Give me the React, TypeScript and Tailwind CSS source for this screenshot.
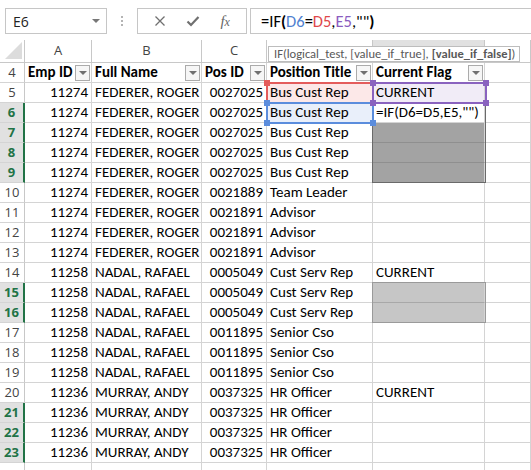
import React from 'react';

type Row = { n: number; id: string; name: string; pos: string; title: string; flag?: string };

const ROWS: Row[] = [
  { n: 5, id: '11274', name: 'FEDERER, ROGER', pos: '0027025', title: 'Bus Cust Rep', flag: 'CURRENT' },
  { n: 6, id: '11274', name: 'FEDERER, ROGER', pos: '0027025', title: 'Bus Cust Rep', flag: '=IF(D6=D5,E5,"")' },
  { n: 7, id: '11274', name: 'FEDERER, ROGER', pos: '0027025', title: 'Bus Cust Rep' },
  { n: 8, id: '11274', name: 'FEDERER, ROGER', pos: '0027025', title: 'Bus Cust Rep' },
  { n: 9, id: '11274', name: 'FEDERER, ROGER', pos: '0027025', title: 'Bus Cust Rep' },
  { n: 10, id: '11274', name: 'FEDERER, ROGER', pos: '0021889', title: 'Team Leader' },
  { n: 11, id: '11274', name: 'FEDERER, ROGER', pos: '0021891', title: 'Advisor' },
  { n: 12, id: '11274', name: 'FEDERER, ROGER', pos: '0021891', title: 'Advisor' },
  { n: 13, id: '11274', name: 'FEDERER, ROGER', pos: '0021891', title: 'Advisor' },
  { n: 14, id: '11258', name: 'NADAL, RAFAEL', pos: '0005049', title: 'Cust Serv Rep', flag: 'CURRENT' },
  { n: 15, id: '11258', name: 'NADAL, RAFAEL', pos: '0005049', title: 'Cust Serv Rep' },
  { n: 16, id: '11258', name: 'NADAL, RAFAEL', pos: '0005049', title: 'Cust Serv Rep' },
  { n: 17, id: '11258', name: 'NADAL, RAFAEL', pos: '0011895', title: 'Senior Cso' },
  { n: 18, id: '11258', name: 'NADAL, RAFAEL', pos: '0011895', title: 'Senior Cso' },
  { n: 19, id: '11258', name: 'NADAL, RAFAEL', pos: '0011895', title: 'Senior Cso' },
  { n: 20, id: '11236', name: 'MURRAY, ANDY', pos: '0037325', title: 'HR Officer', flag: 'CURRENT' },
  { n: 21, id: '11236', name: 'MURRAY, ANDY', pos: '0037325', title: 'HR Officer' },
  { n: 22, id: '11236', name: 'MURRAY, ANDY', pos: '0037325', title: 'HR Officer' },
  { n: 23, id: '11236', name: 'MURRAY, ANDY', pos: '0037325', title: 'HR Officer' },
];

const SELECTED = [6, 7, 8, 9, 15, 16, 21, 22, 23];
const COLS = 'grid grid-cols-[25px_67px_110px_65px_106px_112px_1fr]';
const CELL = 'border-r border-b border-[#d4d4d4] flex items-center overflow-hidden whitespace-nowrap';

const titleBg = (n: number) => (n === 5 ? 'bg-[#fce8e8]' : n === 6 ? 'bg-[#e9effa]' : '');
const flagBg = (n: number) => {
  if (n === 5) return 'bg-[#f1ecf7]';
  if (n >= 7 && n <= 9) return 'bg-[#a3a3a3] border-b-[#8f8f8f]';
  if (n === 15 || n === 16) return 'bg-[#c6c6c6] border-b-[#a8a8a8]';
  return '';
};

const FilterBtn = () => (
  <div className="ml-auto mr-[1px] w-[15px] h-[16px] border border-[#ababab] bg-[#f6f6f6] flex items-center justify-center shrink-0">
    <div className="w-0 h-0 border-l-[4px] border-r-[4px] border-t-[4px] border-l-transparent border-r-transparent border-t-[#707070]" />
  </div>
);

const RangeBox = ({ left, top, width, color }: { left: number; top: number; width: number; color: string }) => (
  <div className="absolute pointer-events-none" style={{ left, top, width, height: 22 }}>
    <div className="absolute inset-0 border-2" style={{ borderColor: color }} />
    {[
      'left-[-2px] top-[-2px]',
      'right-[-2px] top-[-2px]',
      'left-[-2px] bottom-[-2px]',
      'right-[-2px] bottom-[-2px]',
    ].map((p) => (
      <div key={p} className={`absolute w-[6px] h-[6px] ${p}`} style={{ backgroundColor: color }} />
    ))}
  </div>
);

export default function App() {
  return (
    <div className="relative w-[531px] h-[470px] overflow-hidden bg-white font-[Carlito,Lato,sans-serif] text-black">
      {/* formula bar */}
      <div className="h-[40px] flex items-start pt-[8px]">
        <div className="ml-[5px] w-[102px] h-[26px] border border-[#c6c6c6] flex items-center pl-[7px] pr-[6px] font-['Open_Sans',sans-serif] text-[14px] text-[#222]">
          E6
          <div className="ml-auto w-0 h-0 border-l-[4px] border-r-[4px] border-t-[4px] border-l-transparent border-r-transparent border-t-[#777]" />
        </div>
        <div className="w-[30px] h-[26px] flex flex-col items-center justify-center gap-[2px]">
          <div className="w-[2px] h-[2px] bg-[#b4b4b4]" />
          <div className="w-[2px] h-[2px] bg-[#b4b4b4]" />
          <div className="w-[2px] h-[2px] bg-[#b4b4b4]" />
        </div>
        <div className="w-[110px] h-[26px] border border-[#c6c6c6] flex items-center justify-around px-[6px] text-[#7a7a7a]">
          <svg width="12" height="12" viewBox="0 0 12 12">
            <path d="M1.5 1.5 L10.5 10.5 M10.5 1.5 L1.5 10.5" stroke="#707070" strokeWidth="1.3" />
          </svg>
          <svg width="14" height="12" viewBox="0 0 14 12">
            <path d="M1.5 6.5 L5 10 L12.5 2" stroke="#707070" strokeWidth="2.2" fill="none" />
          </svg>
          <span className="font-['Liberation_Serif',serif] italic text-[15px] text-[#666] leading-none">
            f<span className="text-[12px]">x</span>
          </span>
        </div>
        <div className="ml-[3px] flex-1 h-[26px] border border-r-0 border-[#c6c6c6] flex items-center pl-[10px] text-[16.5px]">
          <span>=IF</span>
          <span className="font-bold">(</span>
          <span className="text-[#4f7fd0]">D6</span>
          <span>=</span>
          <span className="text-[#e0484b]">D5</span>
          <span>,</span>
          <span className="text-[#8a5cbf]">E5</span>
          <span>,""</span>
          <span className="font-bold">)</span>
        </div>
      </div>

      {/* column headers */}
      <div className={`${COLS} h-[23px] font-['Open_Sans',sans-serif] text-[13px] text-[#444]`}>
        <div className="border-r border-b border-[#c8c8c8] relative">
          <svg className="absolute right-[2px] bottom-[3px]" width="17" height="17" viewBox="0 0 17 17">
            <path d="M17 0 L17 17 L0 17 Z" fill="#dcdcdc" />
          </svg>
        </div>
        {['A', 'B', 'C', 'D', 'E', 'F'].map((c) => (
          <div
            key={c}
            className={`border-r border-b border-[#c8c8c8] flex items-center justify-center ${c === 'E' ? 'bg-[#e1e1e1]' : ''}`}
          >
            {['A', 'B', 'C'].includes(c) ? c : ''}
          </div>
        ))}
      </div>

      {/* header row 4 */}
      <div className={`${COLS} h-5 text-[15px] font-bold`}>
        <div className={`${CELL} border-r-[#c8c8c8] justify-center font-normal font-['Open_Sans',sans-serif] text-[13px] text-[#444]`}>4</div>
        {['Emp ID', 'Full Name', 'Pos ID', 'Position Title', 'Current Flag'].map((h) => (
          <div key={h} className={`${CELL} pl-[3px]`}>
            <span>{h}</span>
            <FilterBtn />
          </div>
        ))}
        <div className={CELL} />
      </div>

      {/* data rows */}
      {ROWS.map((r) => {
        const sel = SELECTED.includes(r.n);
        return (
          <div key={r.n} className={`${COLS} h-5 text-[15px]`}>
            <div
              className={`${CELL} justify-center font-['Open_Sans',sans-serif] text-[13px] ${
                sel ? 'bg-[#e1e1e1] border-r-2 border-r-[#217346] text-[#217346] font-bold' : 'border-r-[#c8c8c8] text-[#444]'
              }`}
            >
              {r.n}
            </div>
            <div className={`${CELL} justify-end pr-[3px]`}>{r.id}</div>
            <div className={`${CELL} pl-[3px]`}>{r.name}</div>
            <div className={`${CELL} justify-end pr-[3px]`}>{r.pos}</div>
            <div className={`${CELL} pl-[3px] ${titleBg(r.n)}`}>{r.title}</div>
            <div className={`${CELL} pl-[3px] ${flagBg(r.n)}`}>{r.flag ?? ''}</div>
            <div className={CELL} />
          </div>
        );
      })}
      <div className={`${COLS} h-5`}>
        <div className="border-r border-[#c8c8c8]" />
        {[0, 1, 2, 3, 4, 5].map((i) => (
          <div key={i} className="border-r border-[#d4d4d4]" />
        ))}
      </div>

      {/* selection outlines */}
      <div className="absolute left-[372px] top-[102px] w-[114px] h-[81px] border border-[#6a6a6a] pointer-events-none" />
      <div className="absolute left-[372px] top-[282px] w-[114px] h-[41px] border border-[#9a9a9a] pointer-events-none" />

      {/* formula reference ranges */}
      <RangeBox left={266} top={82} width={108} color="#e45c5c" />
      <RangeBox left={266} top={102} width={108} color="#5b8ddd" />
      <RangeBox left={372} top={82} width={115} color="#8a63bf" />

      {/* function tooltip */}
      <div className="absolute left-[268px] top-[46px] h-[16px] pl-[5px] pr-[4px] border border-[#bdbdbd] bg-white flex items-center text-[12.5px] text-[#595959] whitespace-nowrap">
        IF(logical_test, [value_if_true], <span className="font-bold ml-[3px]">[value_if_false]</span>)
      </div>
    </div>
  );
}
